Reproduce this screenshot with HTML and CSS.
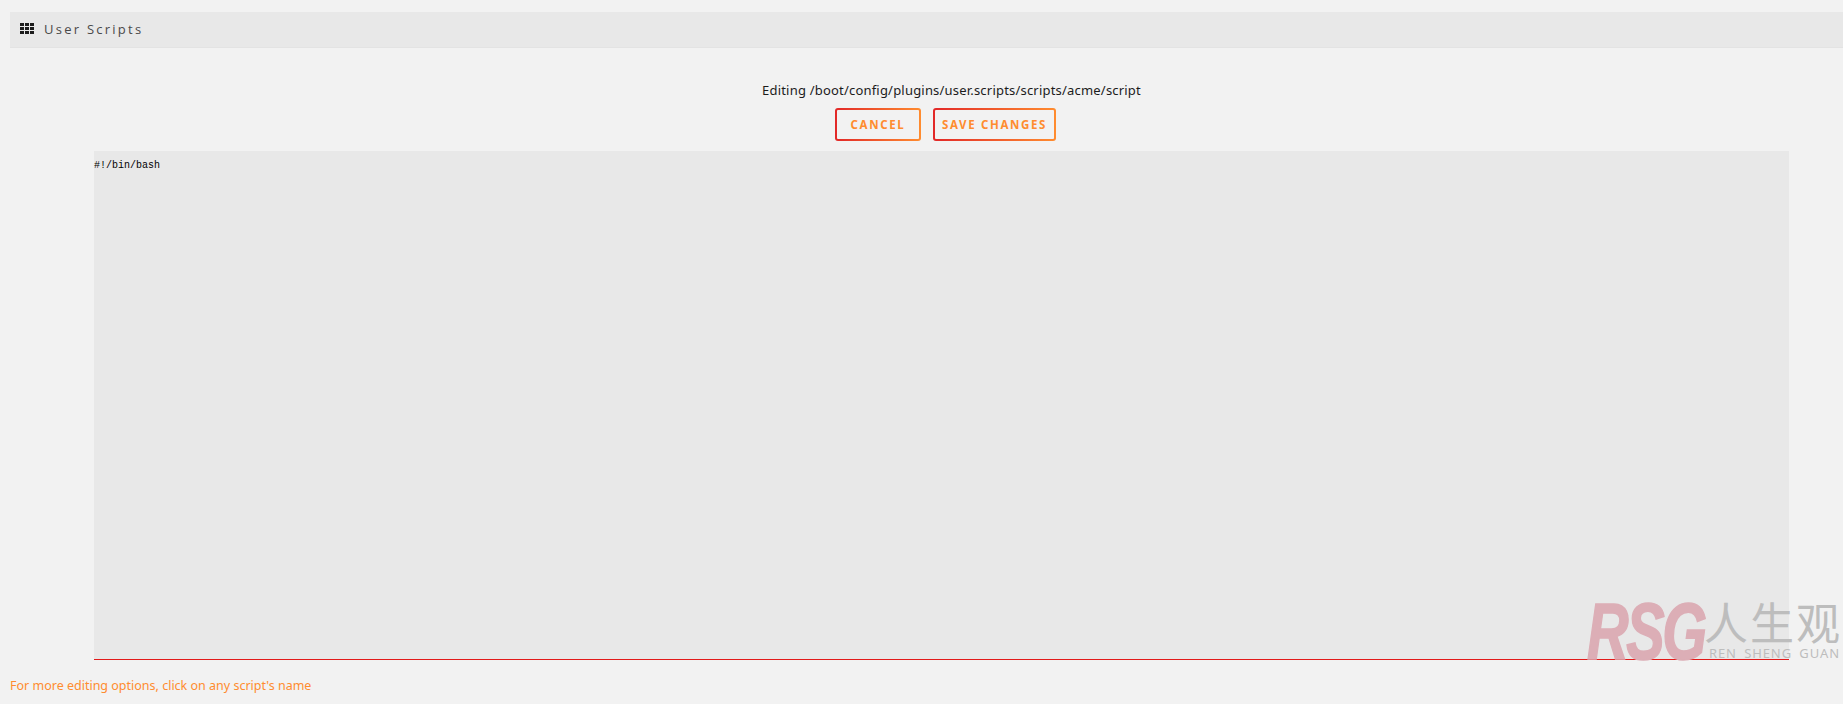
FILE: index.html
```html
<!DOCTYPE html>
<html lang="en">
<head>
<meta charset="utf-8">
<title>User Scripts</title>
<link rel="stylesheet" href="styles.css">
</head>
<body>
<div class="title-bar">
  <svg class="grid-icon" width="14" height="11" viewBox="0 0 14 11" aria-hidden="true">
    <path d="M0 0h4v3H0zM5 0h4v3H5zM10 0h4v3h-4zM0 4h4v3H0zM5 4h4v3H5zM10 4h4v3h-4zM0 8h4v3H0zM5 8h4v3H5zM10 8h4v3h-4z"/>
  </svg>
  <span class="title-text">User Scripts</span>
</div>
<main class="editor">
  <p class="path">Editing /boot/config/plugins/user.scripts/scripts/acme/script</p>
  <div class="actions">
    <button class="btn btn-cancel" type="button">CANCEL</button>
    <button class="btn btn-save" type="button">SAVE CHANGES</button>
  </div>
  <div class="code">#!/bin/bash</div>
</main>
<p class="hint">For more editing options, click on any script's name</p>
<div class="watermark">
  <span class="wm-logo">RSG</span>
  <div class="wm-right">
    <span class="wm-cn">人生观</span>
    <span class="wm-en">REN SHENG GUAN</span>
  </div>
</div>
</body>
</html>
```
FILE: styles.css
```css
html, body {
  margin: 0;
  height: 704px;
  overflow: hidden;
}
body {
  background: #f2f2f2;
  font-family: "Noto Sans", "Open Sans", sans-serif;
  padding-top: 12px;
  box-sizing: border-box;
  position: relative;
}
.title-bar {
  margin-left: 10px;
  height: 35px;
  background: #e8e8e8;
  border-bottom: 1px solid #e3e3e3;
  display: flex;
  align-items: center;
  padding-left: 10px;
  gap: 10px;
  color: #1a1a1a;
}
.grid-icon {
  fill: #1c1c1c;
  margin-top: -2px;
}
.title-text {
  font-family: "Open Sans", sans-serif;
  font-size: 13px;
  letter-spacing: 2.25px;
  color: #4a4a4a;
  margin-top: -1px;
}
.editor {
  display: flex;
  flex-direction: column;
  align-items: center;
  padding: 0 54px 0 94px;
}
.path {
  margin: 33px 0 0 20px;
  font-size: 13px;
  letter-spacing: .2px;
  line-height: 18px;
  color: #1c1c1c;
}
.actions {
  display: flex;
  gap: 12px;
  margin: 9px 0 0 8px;
}
.btn {
  height: 33px;
  box-sizing: border-box;
  padding: 0;
  border: 2px solid transparent;
  border-radius: 3px;
  background:
    linear-gradient(#f2f2f2, #f2f2f2) padding-box,
    linear-gradient(90deg, #e22828, #ff8c2f) border-box;
  color: #ff8c2f;
  font-family: "Noto Sans", sans-serif;
  font-weight: 700;
  font-size: 11.5px;
  letter-spacing: 1.65px;
}
.btn-cancel { width: 86px; }
.btn-save { width: 123px; }
.code {
  align-self: stretch;
  box-sizing: border-box;
  margin-top: 10px;
  height: 509px;
  background: #e8e8e8;
  border-bottom: 1px solid #e21a1a;
  font-family: "Liberation Mono", monospace;
  font-size: 10px;
  line-height: 12px;
  padding-top: 9px;
  color: #000;
}
.hint {
  margin: 17px 0 0 10px;
  font-size: 12.5px;
  line-height: 18px;
  color: #ff8c2f;
}
.watermark {
  position: absolute;
  left: 1587px;
  top: 596px;
  display: flex;
  gap: 4px;
  height: 70px;
}
.wm-logo {
  display: block;
  width: 118px;
  font-family: "Liberation Sans", sans-serif;
  font-weight: 700;
  font-style: italic;
  font-size: 72px;
  line-height: 70px;
  letter-spacing: -3px;
  color: #dcaeb6;
  -webkit-text-stroke: 1.5px #dcaeb6;
  transform: scale(.8, 1.1);
  transform-origin: 0 50%;
}
.wm-right {
  display: flex;
  flex-direction: column;
  align-items: flex-start;
  padding-top: 2px;
}
.wm-cn {
  font-family: "Noto Sans CJK SC", sans-serif;
  font-size: 44px;
  line-height: 47px;
  letter-spacing: 2px;
  margin-left: -5px;
  color: #bdbdbd;
}
.wm-en {
  font-family: "Noto Sans", sans-serif;
  font-size: 13px;
  line-height: 16px;
  letter-spacing: .9px;
  word-spacing: 3px;
  color: #bdbdbd;
  white-space: nowrap;
}
```
